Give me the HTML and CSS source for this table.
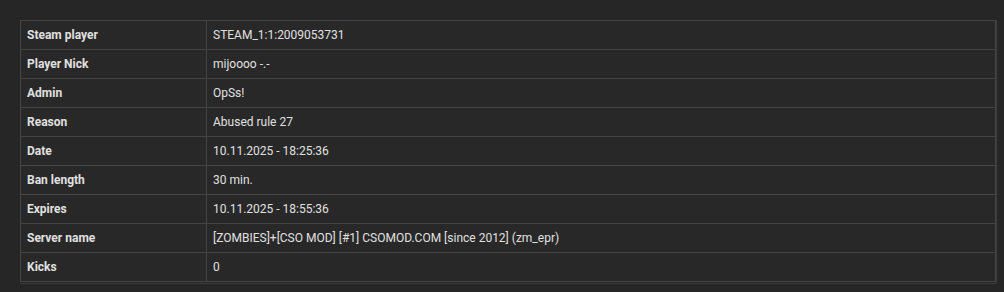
FILE: index.html
```html
<!DOCTYPE html>
<html>
<head>
<meta charset="utf-8">
<link rel="stylesheet" href="styles.css">
</head>
<body>
<div class="wrap">
<div class="frame">
<table class="ban-table">
<tbody>
<tr><th>Steam player</th><td>STEAM_1:1:2009053731</td></tr>
<tr><th>Player Nick</th><td>mijoooo -.-</td></tr>
<tr><th>Admin</th><td>OpSs!</td></tr>
<tr><th>Reason</th><td>Abused rule 27</td></tr>
<tr><th>Date</th><td>10.11.2025 - 18:25:36</td></tr>
<tr><th>Ban length</th><td>30 min.</td></tr>
<tr><th>Expires</th><td>10.11.2025 - 18:55:36</td></tr>
<tr><th>Server name</th><td>[ZOMBIES]+[CSO MOD] [#1] CSOMOD.COM [since 2012] (zm_epr)</td></tr>
<tr><th>Kicks</th><td>0</td></tr>
</tbody>
</table>
</div>
</div>
</body>
</html>
```
FILE: styles.css
```css
html, body {
  margin: 0;
  padding: 0;
  background: #262626;
  height: 100%;
}
.wrap {
  padding: 20px 5px 0 20px;
}
.frame {
  width: 977px;
  border-right: 1px solid #3c3c3c;
  border-bottom: 1px solid #3c3c3c;
  box-sizing: border-box;
  padding: 0 1px 1px 0;
}
.ban-table {
  width: 976px;
  border-collapse: collapse;
  border: 1px solid #444;
  font-family: Roboto, "Liberation Sans", sans-serif;
  font-size: 12px;
  color: #e0e0e0;
  background: #282828;
}
.ban-table th,
.ban-table td {
  border: 1px solid #444;
  height: 28px;
  padding: 0 6px;
  text-align: left;
  vertical-align: middle;
}
.ban-table th {
  width: 173px;
  font-weight: bold;
}
```
